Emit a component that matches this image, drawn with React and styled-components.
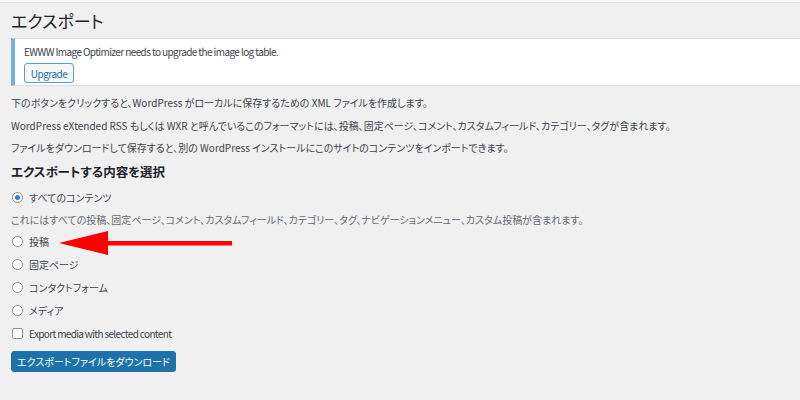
import React from "react";
import styled, { createGlobalStyle } from "styled-components";

const GlobalStyle = createGlobalStyle`
  html, body {
    margin: 0;
    padding: 0;
    background: #f0f0f1;
  }
  body {
    font-family: "Noto Sans CJK JP", "Noto Sans", sans-serif;
    font-size: 10px;
    color: #3c434a;
    font-feature-settings: "palt";
  }
  button {
    font-feature-settings: "palt";
  }
`;

const options = [
  { label: "すべてのコンテンツ", checked: true },
  { label: "投稿", arrow: true },
  { label: "固定ページ" },
  { label: "コンタクトフォーム" },
  { label: "メディア" },
];

const App = () => {
  const [first, ...rest] = options;
  return (
    <>
      <GlobalStyle />
      <TopLine />
      <Page>
        <Title>エクスポート</Title>
        <Notice>
          <NoticeText>EWWW Image Optimizer needs to upgrade the image log table.</NoticeText>
          <SecondaryButton>Upgrade</SecondaryButton>
        </Notice>
        <Content>
          <Para $h={23}>下のボタンをクリックすると、WordPress がローカルに保存するための XML ファイルを作成します。</Para>
          <Para $h={23}>WordPress eXtended RSS もしくは WXR と呼んでいるこのフォーマットには、投稿、固定ページ、コメント、カスタムフィールド、カテゴリー、タグが含まれます。</Para>
          <Para $h={22}>ファイルをダウンロードして保存すると、別の WordPress インストールにこのサイトのコンテンツをインポートできます。</Para>
          <Heading>エクスポートする内容を選択</Heading>
          <Option $h={24}>
            <Radio $checked={first.checked} />
            {first.label}
          </Option>
          <Description>これにはすべての投稿、固定ページ、コメント、カスタムフィールド、カテゴリー、タグ、ナビゲーションメニュー、カスタム投稿が含まれます。</Description>
          {rest.map((o) => (
            <Option key={o.label} $h={23}>
              <Radio />
              {o.label}
              {o.arrow && (
                <Arrow width="175" height="24" viewBox="0 0 175 24">
                  <polygon points="0,12 49,0 49,24" fill="#ff0000" />
                  <rect x="48" y="10" width="125" height="4.5" fill="#ff0000" />
                </Arrow>
              )}
            </Option>
          ))}
          <Option $h={23} $tight>
            <Checkbox />
            Export media with selected content
          </Option>
          <PrimaryButton>エクスポートファイルをダウンロード</PrimaryButton>
        </Content>
      </Page>
    </>
  );
};

export default App;

const TopLine = styled.div`
  height: 2px;
  background: #f6f6f6;
  border-bottom: 1px solid #e2e2e2;
`;

const Page = styled.div`
  padding-left: 11px;
`;

const Title = styled.h1`
  margin: 0;
  height: 35px;
  line-height: 35px;
  font-size: 17px;
  font-weight: 400;
  color: #1d2327;
`;

const Notice = styled.div`
  box-sizing: border-box;
  height: 48px;
  background: #fff;
  border-top: 1px solid #dcdcde;
  border-bottom: 1px solid #dcdcde;
  border-left: 4px solid #72aee6;
  padding: 5px 0 0 9px;
`;

const NoticeText = styled.div`
  line-height: 16px;
  margin-bottom: 3px;
  letter-spacing: -0.6px;
`;

const SecondaryButton = styled.button`
  box-sizing: border-box;
  width: 50px;
  height: 20px;
  padding: 0;
  font-family: inherit;
  font-size: 10px;
  letter-spacing: -0.5px;
  color: #2271b1;
  background: #f6f7f7;
  border: 1px solid #5a9fd4;
  border-radius: 3px;
`;

const Content = styled.div`
  display: flex;
  flex-direction: column;
  align-items: flex-start;
  padding-top: 5px;
`;

const Para = styled.p`
  margin: 0;
  height: ${(p) => p.$h}px;
  line-height: ${(p) => p.$h}px;
  white-space: nowrap;
`;

const Heading = styled.h2`
  margin: 0;
  height: 26px;
  line-height: 26px;
  font-size: 12.5px;
  font-weight: 700;
  color: #1d2327;
`;

const Description = styled.p`
  margin: 0;
  height: 21px;
  line-height: 21px;
  color: #646970;
  white-space: nowrap;
`;

const Option = styled.label`
  position: relative;
  display: flex;
  align-items: center;
  gap: 6px;
  height: ${(p) => p.$h}px;
  padding-left: 1px;
  letter-spacing: ${(p) => (p.$tight ? "-0.65px" : "normal")};
`;

const Radio = styled.span`
  box-sizing: border-box;
  width: 11px;
  height: 11px;
  border-radius: 50%;
  border: 1px solid #8c8f94;
  background: #fff;
  display: flex;
  align-items: center;
  justify-content: center;
  &::after {
    content: "";
    width: 5px;
    height: 5px;
    border-radius: 50%;
    background: #3582c4;
    display: ${(p) => (p.$checked ? "block" : "none")};
  }
`;

const Checkbox = styled.span`
  box-sizing: border-box;
  width: 11px;
  height: 11px;
  border-radius: 2px;
  border: 1px solid #8c8f94;
  background: #fff;
`;

const Arrow = styled.svg`
  position: absolute;
  left: 48px;
  top: 1px;
`;

const PrimaryButton = styled.button`
  box-sizing: border-box;
  margin-top: 6px;
  width: 165px;
  height: 21px;
  padding: 0;
  white-space: nowrap;
  font-family: inherit;
  font-size: 10px;
  color: #fff;
  background: #1e72aa;
  border: 1px solid #1e72aa;
  border-radius: 3px;
`;
